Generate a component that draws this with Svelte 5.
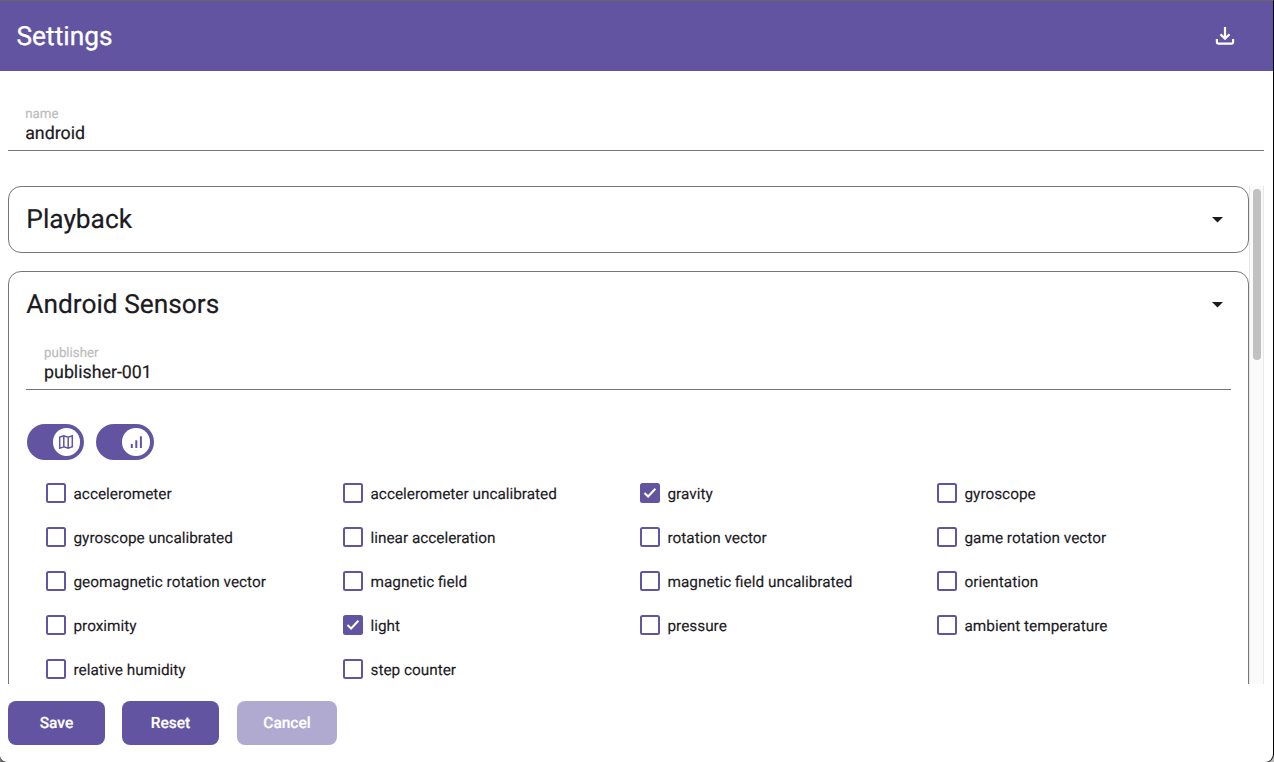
<script>
  const sensors = [
    'accelerometer', 'accelerometer uncalibrated', 'gravity', 'gyroscope',
    'gyroscope uncalibrated', 'linear acceleration', 'rotation vector', 'game rotation vector',
    'geomagnetic rotation vector', 'magnetic field', 'magnetic field uncalibrated', 'orientation',
    'proximity', 'light', 'pressure', 'ambient temperature',
    'relative humidity', 'step counter'
  ];
  let checked = $state({ gravity: true, light: true });
  const toggle = (s) => (checked[s] = !checked[s]);
</script>

{#snippet caret()}
  <svg class="caret" viewBox="0 0 11 6"><path d="M0 0h11L5.500 5.600z" fill="#1c1b1f" /></svg>
{/snippet}

<div class="backdrop">
  <div class="window">
    <header>
      <h1>Settings</h1>
      <svg class="download" viewBox="0 0 24 24" fill="none" stroke="#fff" stroke-width="2.200">
        <path d="M12 3v11.500M7.500 10.200l4.500 4.500 4.500-4.500M3.900 15v3q0 1.700 1.700 1.700h12.800q1.700 0 1.700-1.700V15" />
      </svg>
    </header>

    <div class="field name">
      <span class="label">name</span>
      <span class="value">android</span>
    </div>

    <div class="scroller">
      <div class="panels">
        <section class="panel closed">
          <div class="title"><h2>Playback</h2>{@render caret()}</div>
        </section>
        <section class="panel open">
          <div class="title"><h2>Android Sensors</h2>{@render caret()}</div>
          <div class="field publisher">
            <span class="label">publisher</span>
            <span class="value">publisher-001</span>
          </div>
          <div class="switches">
            <div class="switch">
              <div class="knob">
                <svg viewBox="0 0 16 16" fill="none" stroke="#6254a1" stroke-width="1.500">
                  <path d="M1.700 3.300L5.800 1.900l4.400 1.400 4.100-1.400v10.800l-4.100 1.400-4.400-1.400-4.100 1.400zM5.800 1.900v10.800M10.200 3.300v10.800" />
                </svg>
              </div>
            </div>
            <div class="switch">
              <div class="knob">
                <svg viewBox="0 0 16 16" fill="#6254a1">
                  <path d="M2.800 10h2v4h-2zM7.300 6.200h2V14h-2zM11.900 2.200h2V14h-2z" />
                </svg>
              </div>
            </div>
          </div>
          <div class="sensors">
            {#each sensors as s}
              <div class="sensor" role="checkbox" tabindex="-1" aria-checked={!!checked[s]} onclick={() => toggle(s)} onkeydown={() => {}}>
                <span class="box" class:on={checked[s]}>
                  {#if checked[s]}
                    <svg viewBox="0 0 20 20" fill="none" stroke="#fff" stroke-width="2"><path d="M4.500 10l3.600 3.500 7.300-7.700" /></svg>
                  {/if}
                </span>
                <span class="text">{s}</span>
              </div>
            {/each}
          </div>
        </section>
      </div>
      <div class="track"><div class="thumb"></div></div>
    </div>

    <footer>
      <button>Save</button>
      <button>Reset</button>
      <button class="cancel" disabled>Cancel</button>
    </footer>
  </div>
</div>

<style>
  :global(body) { margin: 0; overflow: hidden; }
  .backdrop {
    width: 1274px;
    height: 762px;
    box-sizing: border-box;
    background: linear-gradient(to right, #777 50%, #bbb 50%);
    font-family: Roboto, "Liberation Sans", sans-serif;
    color: #1c1b1f;
    text-rendering: geometricPrecision;
  }
  .window {
    width: 1274px;
    height: 763px;
    box-sizing: border-box;
    border: 1px solid #222;
    border-top-color: #666;
    border-right-color: #000;
    border-left: 0;
    border-radius: 0 0 9px 7px;
    background: #fff;
    display: flex;
    flex-direction: column;
    overflow: hidden;
  }
  header {
    height: 70px;
    flex: none;
    box-sizing: border-box;
    padding: 0 36.400px 0 16.500px;
    background: #6254a1;
    display: flex;
    align-items: center;
    justify-content: space-between;
  }
  h1, h2 { margin: 0; font-size: 26.300px; line-height: 32px; font-weight: 400; }
  h1 { color: #fff; padding-top: 2px; -webkit-text-stroke: 0.3px #fff; }
  h2 { padding-left: 0.300px; -webkit-text-stroke: 0.2px #1c1b1f; }
  .download { width: 24px; height: 24px; display: block; }
  .field {
    box-sizing: border-box;
    border-bottom: 1px solid #79747e;
    display: flex;
    flex-direction: column;
    padding: 1px 0 0 17.200px;
  }
  .name { margin: 35px 9px 0 8px; height: 45px; flex: none; }
  .label { font-size: 13.300px; line-height: 16px; color: #bdbdbd; -webkit-text-stroke: 0.2px #bdbdbd; }
  .value { font-size: 17.800px; line-height: 22px; -webkit-text-stroke: 0.2px #1c1b1f; }
  .scroller {
    margin: 35px 9px 0 8px;
    height: 498px;
    flex: none;
    display: flex;
    overflow: hidden;
  }
  .panels { flex: 1; min-width: 0; display: flex; flex-direction: column; gap: 18px; }
  .panel { box-sizing: border-box; border: 1px solid #79747e; border-radius: 13px; padding: 0 17px; flex: none; }
  .closed { height: 67px; }
  .open { height: 620px; }
  .title { height: 65px; display: flex; align-items: center; justify-content: space-between; }
  .caret { width: 11px; height: 6px; margin-right: 8px; }
  .publisher { height: 45px; margin-top: 8px; padding-left: 18.100px; }
  .switches { display: flex; gap: 12px; margin: 34.500px 0 0 0.500px; }
  .switch {
    width: 57.500px;
    height: 36px;
    box-sizing: border-box;
    padding: 0 4px;
    border-radius: 18px;
    background: #6254a1;
    display: flex;
    align-items: center;
    justify-content: flex-end;
  }
  .switches { margin-top: 34px; }
  .knob { width: 27.500px; height: 27.500px; border-radius: 50%; background: #fff; display: flex; align-items: center; justify-content: center; }
  .knob svg { width: 16px; height: 16px; }
  .sensors {
    display: grid;
    grid-template-columns: repeat(4, 297px);
    grid-auto-rows: 44px;
    margin: 11px 0 0 20px;
  }
  .sensor { display: flex; align-items: center; gap: 7.500px; white-space: nowrap; }
  .box { width: 20px; height: 20px; box-sizing: border-box; border: 2px solid #6254a1; border-radius: 2.500px; }
  .box.on { border: 0; background: #6254a1; }
  .box svg { display: block; width: 20px; height: 20px; }
  .text { font-size: 15.350px; line-height: 20px; padding-top: 2px; -webkit-text-stroke: 0.15px #1c1b1f; }
  .track {
    width: 15px;
    box-sizing: border-box;
    border: solid #e8e8e8;
    border-width: 0 1px;
    background: #fafafa;
    padding: 3px 0 0 3px;
    flex: none;
  }
  .thumb { width: 8px; height: 171px; border-radius: 4px; background: #c1c1c1; }
  footer { display: flex; padding: 17px 0 0 8px; }
  button {
    width: 97px;
    height: 44px;
    margin-right: 17px;
    padding: 0;
    border: 0;
    border-radius: 8px;
    background: #6254a1;
    color: #fff;
    font: 500 15.500px/20px Roboto, "Liberation Sans", sans-serif;
    -webkit-text-stroke: 0.2px #fff;
    text-rendering: geometricPrecision;
  }
  .cancel { width: 100px; margin-left: 1px; background: #b0a9d0; }
</style>
